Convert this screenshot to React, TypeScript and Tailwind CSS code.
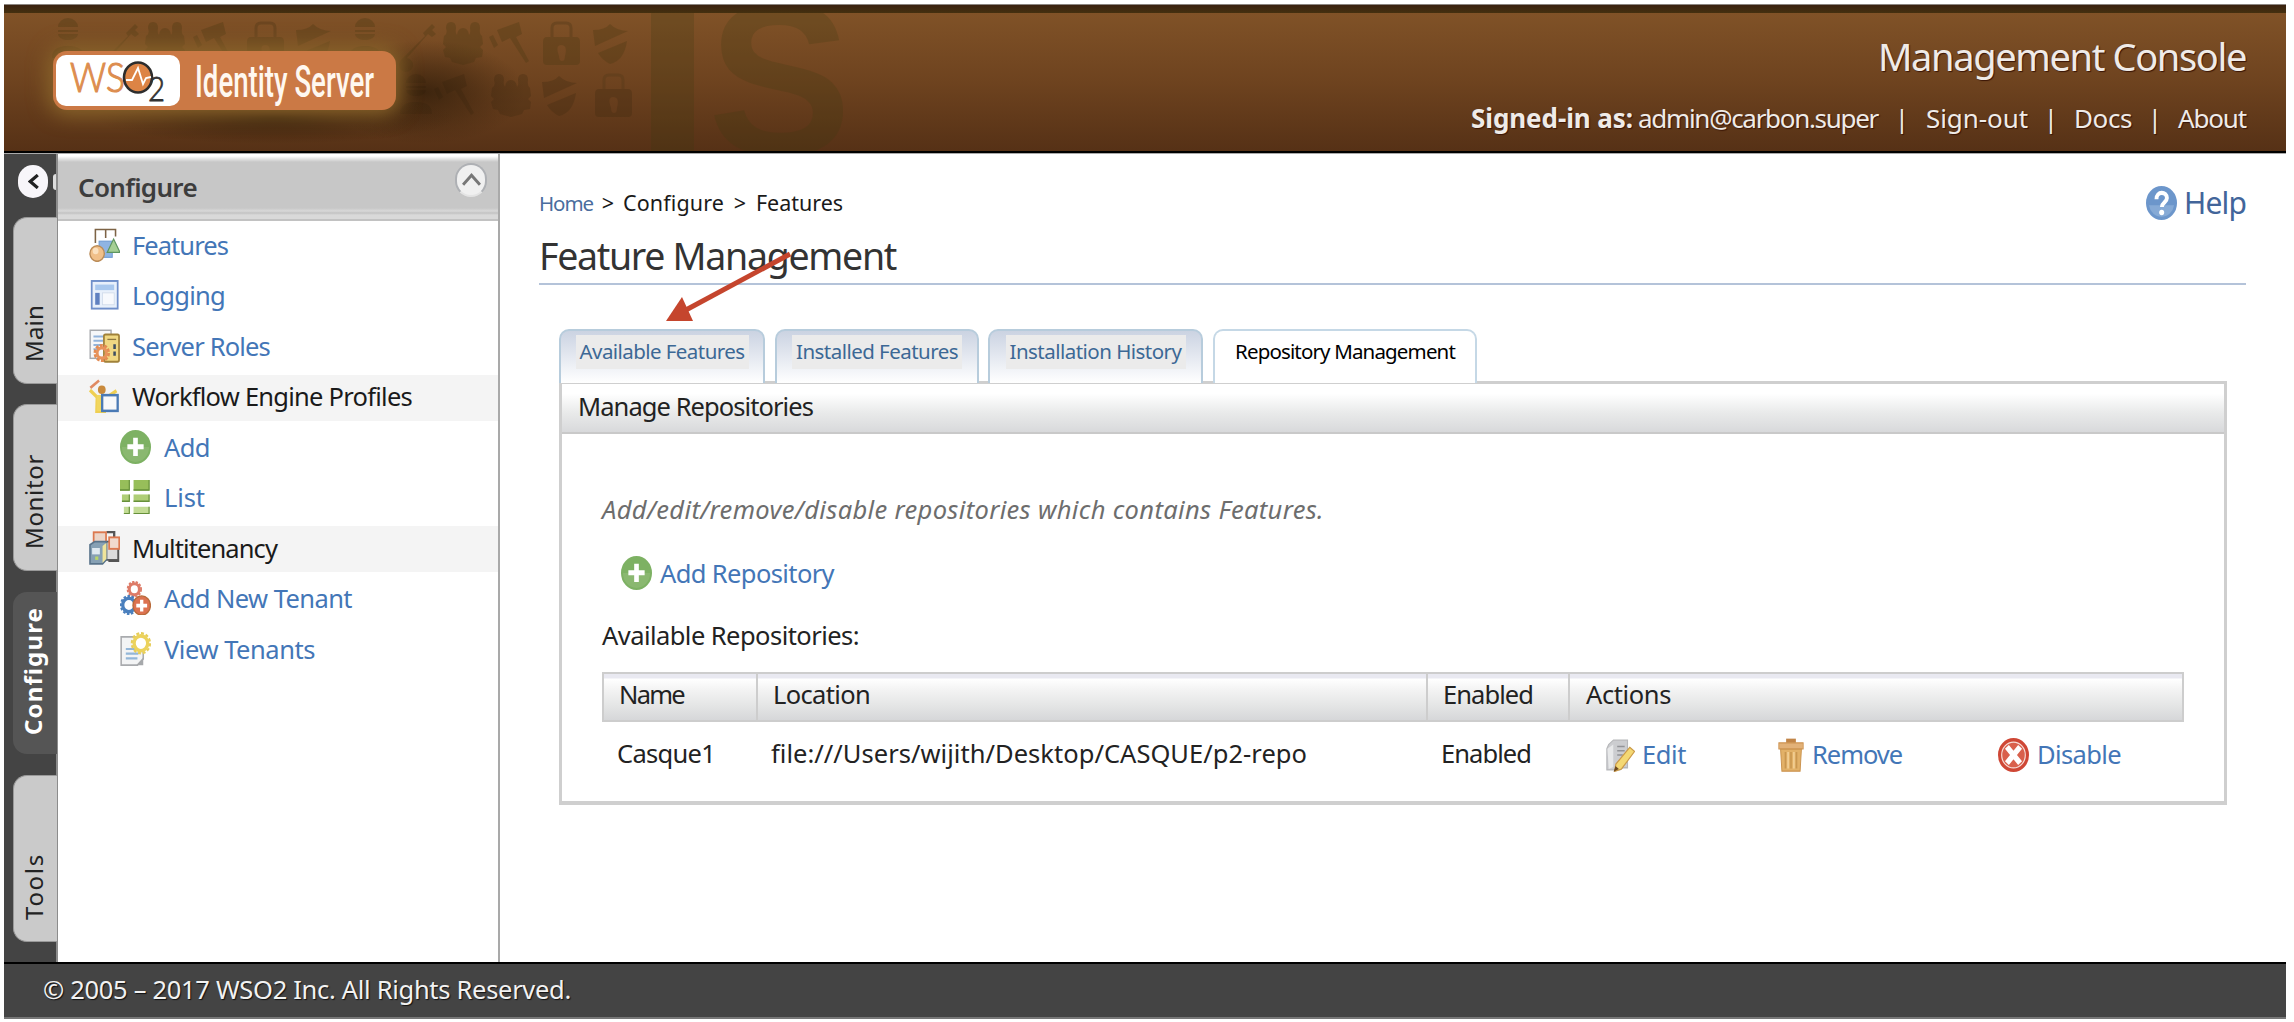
import { useLayoutEffect, useRef, useState } from "react";
import type { ReactNode } from "react";

/* A single line of text whose tracking is computed so that it fills `w` pixels. */
function Fit({ w, children, className = "", vertical = false }: { w: number; children: string; className?: string; vertical?: boolean }) {
  const ref = useRef<HTMLSpanElement>(null);
  const [spacing, setSpacing] = useState(0);
  useLayoutEffect(() => {
    if (!ref.current) return;
    ref.current.style.letterSpacing = "0px";
    const box = ref.current.getBoundingClientRect();
    const natural = vertical ? box.height : box.width;
    const next = (w - natural) / children.length;
    ref.current.style.letterSpacing = `${next}px`;
    setSpacing(next);
  }, [w, children, vertical]);
  return (
    <span className={`block shrink-0 whitespace-nowrap ${className}`}>
      <span ref={ref} style={{ letterSpacing: `${spacing}px` }}>
        {children}
      </span>
    </span>
  );
}

function Icon({ children, className = "h-[34px] w-[31px]" }: { children: ReactNode; className?: string }) {
  return (
    <svg viewBox="0 0 16 16" preserveAspectRatio="none" className={`shrink-0 ${className}`} fill="none">
      {children}
    </svg>
  );
}

const FeaturesIcon = () => (
  <Icon>
    <path d="M3.300 7V.7h10.400V4M8.600.7v4" stroke="#7d6345" strokeWidth=".8" />
    <rect x="5.200" y="6.200" width="6.800" height="7.600" fill="#8fb4e2" stroke="#6f9bd2" strokeWidth=".5" />
    <path d="M12.700 5.200 16 11.500H9.400z" fill="#a5cf94" stroke="#5d9560" strokeWidth=".6" />
    <circle cx="4.200" cy="12" r="3.700" fill="#f1c089" stroke="#bb8c58" strokeWidth=".7" />
    <circle cx="3.400" cy="10.800" r="1.500" fill="#fbe1bf" />
  </Icon>
);
const LoggingIcon = () => (
  <Icon>
    <rect x="1.400" y="1.400" width="13.400" height="13" fill="#e8f0fb" stroke="#6f8fca" strokeWidth=".9" />
    <rect x="3.200" y="3.100" width="9.800" height="2.600" fill="#a9c8ee" />
    <rect x="3.200" y="7" width="2.300" height="5.600" fill="#5f80c0" />
    <rect x="7" y="7" width="6" height="5.600" fill="#f7f9fd" stroke="#cfdaea" strokeWidth=".4" />
  </Icon>
);
const RolesIcon = () => (
  <Icon>
    <rect x=".6" y=".6" width="10.800" height="13.200" fill="#f6f7f9" stroke="#a7a9ad" strokeWidth=".7" />
    <path d="M2.300 3.500h6M2.300 5.500h5M2.300 7.500h4M2.300 9.500h2" stroke="#92b4dc" strokeWidth=".9" />
    <rect x="7.700" y="2.600" width="7.800" height="12.800" rx=".8" fill="#f0d883" stroke="#a0813a" strokeWidth=".9" />
    <path d="M9.500 4.900h4.500" stroke="#8d7740" strokeWidth=".6" />
    <path d="M13.200 7.200v2.200M13.200 10.600v2" stroke="#3d4e61" strokeWidth="1.300" />
    <circle cx="6.600" cy="11.300" r="3.500" stroke="#e38b52" strokeWidth="1.500" strokeDasharray="1.500 .7" />
    <circle cx="6.600" cy="11.300" r="2.400" stroke="#e8935c" strokeWidth="1.500" />
  </Icon>
);
const WorkflowIcon = () => (
  <Icon>
    <path d="M.7 4.200 5.200.7" stroke="#e08a62" strokeWidth="1.300" />
    <path d="M.5 5.200 4.200 8.600 4 15.500h4l1-6.800 5.200-3.200" fill="none" stroke="#efcf52" strokeWidth="1.600" />
    <rect x="4" y="7.500" width="4.500" height="7.500" fill="#f1d65f" />
    <circle cx="6.600" cy="5" r="2" fill="#c98a3c" />
    <rect x="6.800" y="7.600" width="8" height="7.400" fill="#f7f8fa" stroke="#4a7ab5" strokeWidth="1.200" />
  </Icon>
);
const AddIcon = () => (
  <Icon>
    <circle cx="8" cy="8" r="8" fill="#7db163" />
    <path d="M8 15A7 7 0 0 0 15 8H1a7 7 0 0 0 7 7" fill="#97c07e" opacity=".5" />
    <path d="M8 3.600v8.600M3.800 7.900h8.400" stroke="#fff" strokeWidth="2.400" />
  </Icon>
);
const ListIcon = () => (
  <Icon>
    {[0, 6.8, 12.6].map((y, i) => (
      <g key={y}>
        <rect x={i} y={y} width={5 - i} height={i === 0 ? 5 : 3.5} fill={["#97be5a", "#afce76", "#c3dc95"][i]} />
        <rect x="7" y={y} width="8.200" height={i === 0 ? 5 : 3.5} fill={["#97be5a", "#afce76", "#c3dc95"][i]} />
        <path
          d={`M${i} ${y + (i === 0 ? 4.7 : 3.2)}H4.800V${y}M7 ${y + (i === 0 ? 4.7 : 3.2)}h8V${y}`}
          stroke="#66903a"
          strokeWidth=".6"
        />
      </g>
    ))}
  </Icon>
);
const TenancyIcon = () => (
  <Icon>
    <path d="M9 .5h4v3M10 14h5V8" stroke="#555" strokeWidth="1.200" />
    <rect x="9" y="5" width="6" height="8.600" fill="#dcdcdc" stroke="#555" strokeWidth=".8" />
    <rect x="2.400" y=".6" width="6.400" height="5" fill="#ecd5c8" stroke="#dc7950" strokeWidth=".9" />
    <rect x="10.400" y="3" width="5.200" height="5.400" fill="#f1dacd" stroke="#dc7950" strokeWidth=".9" />
    <path d="M.5 6.500 3 5h6v8.500L7 15.500H.5z" fill="#86a0b4" stroke="#59738a" strokeWidth=".8" />
    <path d="m7 7 2-1.500V13l-2 2z" fill="#efe49b" />
    <path d="M1.600 8h4v3h-4z" fill="#dfe9f0" />
    <rect x="3.200" y="12" width="1.600" height="1.600" fill="#b9d66a" />
  </Icon>
);
const NewTenantIcon = () => (
  <Icon>
    <circle cx="7.400" cy="3.900" r="3.500" stroke="#dd7b68" strokeWidth=".9" strokeDasharray="1.200 .7" />
    <circle cx="7.400" cy="3.900" r="2.600" stroke="#dd7b68" strokeWidth="1.500" />
    <circle cx="4.600" cy="11.300" r="4.200" stroke="#4a7fbd" strokeWidth="1" strokeDasharray="1.300 .8" />
    <circle cx="4.600" cy="11.300" r="3.200" stroke="#4a7fbd" strokeWidth="1.700" />
    <circle cx="11.200" cy="11.500" r="4.500" fill="#dc7250" stroke="#b86a3a" strokeWidth=".7" />
    <path d="M11.200 8.800v5.600M8.400 11.600H14" stroke="#fff" strokeWidth="1.700" />
  </Icon>
);
const ViewTenantsIcon = () => (
  <Icon>
    <path d="M.6 2.300H12v10.400L9 15.600H.6z" fill="#f3f4f5" stroke="#a9abae" strokeWidth=".8" />
    <path d="M12 12 8.500 15.600H12z" fill="#a6a8ab" />
    <path d="M3 8h5.500M3 10.200h6.500M3 12.400h6" stroke="#93b6d8" strokeWidth="1" />
    <circle cx="10.800" cy="5.300" r="4.700" stroke="#e6cd58" strokeWidth="1.100" strokeDasharray="1.500 .95" />
    <circle cx="10.800" cy="5.300" r="3.500" fill="#fff" stroke="#ecd25c" strokeWidth="1.700" />
  </Icon>
);
const EditIcon = () => (
  <Icon className="h-[34px] w-[30px]">
    <path d="M2 3 4.500 1H12v13H9.500L8 15H1V5z" fill="#cccdd0" stroke="#b6b7ba" strokeWidth=".6" />
    <path d="M1.300 5 4.400 3v10.600L2 14.600z" fill="#e8e9ea" />
    <path d="M6.500 4h4M6.500 6h4M6.500 8h3" stroke="#929397" strokeWidth=".7" />
    <path d="m13.200 4.400 2.600 1.900-7 8.300-3.600 1.100.6-3.400z" fill="#f4d873" stroke="#cb9a49" strokeWidth=".6" />
    <path d="m5.600 13.200 1.800 1.400-2.800 1.300z" fill="#6e4a20" />
  </Icon>
);
const TrashIcon = () => (
  <Icon className="h-[34px] w-[26px]">
    <path d="M5 .3h6v2H5z" fill="#c18548" />
    <path d="M.5 2.300h15v2.900H.5z" fill="#e2b178" stroke="#cd9350" strokeWidth=".5" />
    <path d="M1.600 5.200h12.800l-.8 10.400H2.400z" fill="#e2b168" stroke="#cb9450" strokeWidth=".6" />
    <path d="M4.600 6.600v7.800M8 6.600v7.800M11.400 6.600v7.800" stroke="#c99750" strokeWidth="1" />
    <path d="M6.200 6.600v7.800M9.800 6.600v7.800" stroke="#f4d49b" strokeWidth=".9" />
  </Icon>
);
const DisableIcon = () => (
  <Icon>
    <circle cx="8" cy="8" r="8" fill="#cf4735" />
    <circle cx="8" cy="8" r="6.100" fill="#d9604c" stroke="#f6dcd6" strokeWidth=".6" />
    <path d="m4.600 4.200 6.800 7.600M11.400 4.200l-6.800 7.600" stroke="#fff" strokeWidth="2.700" />
  </Icon>
);
const HelpIcon = () => (
  <Icon>
    <circle cx="8" cy="8" r="8" fill="#6c96cb" />
    <path d="M1.500 9a6.600 6.600 0 0 0 13 0z" fill="#86aad6" />
    <path d="M5.400 6.200c0-4 5.400-3.700 5.400-.5 0 2-2.600 2-2.600 4.200" stroke="#fff" strokeWidth="2" />
    <circle cx="8.100" cy="12.500" r="1.300" fill="#fff" />
  </Icon>
);

const Key = () => <path d="M0 38 24 14l-2-3 9-9 3 3-3 3 4 4-4 3-4-3-21 24a7 7 0 1 1-6 2" />;
const Ninja = () => (
  <g>
    <path d="M8 9a10 9 0 0 1 20 0zM8 12h20v2H8zM8 16h20c-1 8-19 8-20 0z" />
    <path d="M2 40c0-10 8-12 16-12s16 2 16 12z" />
  </g>
);
const Group = () => (
  <path d="M4 6q0-6 5-6t5 6q-1 5 1 7 1-7 6-7t6 7q2-2 1-7 0-6 5-6t5 6q-1 6 2 8l1 8-3 3 3 3-1 7-6 1-2 4-11 3-11-3-2-4-5-1-2-7 3-3-3-3 1-8q4-2 2-8" />
);
const Gavel = () => <path d="m8 8 22-8 3 12-6 3 13 24-3 2-16-25-8 4zM0 15l4-2 5 10-4 3z" />;
const Lock = () => (
  <g>
    <path d="M10 16V6q0-5 5-5h9q5 0 5 5v10" fill="none" stroke="#4f3717" strokeWidth="3" />
    <path fillRule="evenodd" d="M5 15h29q4 0 4 5v19q0 4-4 4H5q-4 0-4-4V20q0-5 4-5m12 19q-4-11 2-11 7 0 4 11 0 5-3 5t-3-5" />
  </g>
);
const Shield = () => <path d="M0 8q12 0 17-6 7 7 18 7L2 24zM34 19q-3 20-17 23-8-4-12-11z" />;

function HeaderArt() {
  return (
    <svg className="absolute left-0 top-0 h-[138px] w-[900px]" viewBox="4 13 900 138">
      <defs>
        <radialGradient id="smudge">
          <stop offset="0" stopColor="#2b1a08" stopOpacity=".72" />
          <stop offset=".5" stopColor="#331e0a" stopOpacity=".4" />
          <stop offset="1" stopColor="#3a220c" stopOpacity="0" />
        </radialGradient>
      </defs>
      <g fill="#4f3a14" opacity=".36">
        <g transform="translate(50 18)"><Ninja /></g>
        <g transform="translate(104 22)"><Key /></g>
        <g transform="translate(144 22)"><Group /></g>
        <g transform="translate(193 22)"><Gavel /></g>
        <g transform="translate(246 22)"><Lock /></g>
        <g transform="translate(296 22)"><Shield /></g>
        <g transform="translate(347 18)"><Ninja /></g>
        <g transform="translate(401 22)"><Key /></g>
        <g transform="translate(442 22)"><Group /></g>
        <g transform="translate(489 22)"><Gavel /></g>
        <g transform="translate(542 22)"><Lock /></g>
        <g transform="translate(593 22)"><Shield /></g>
      </g>
      <g fill="#3f2a10" opacity=".3">
        <g transform="translate(398 74)"><Ninja /></g>
        <g transform="translate(434 74)"><Gavel /></g>
        <g transform="translate(490 74)"><Group /></g>
        <g transform="translate(542 74)"><Shield /></g>
        <g transform="translate(594 74)"><Lock /></g>
      </g>
      <g fill="#3a3a10" opacity=".22">
        <rect x="651" y="5" width="43" height="150" />
        <text x="708" y="154" fontFamily="Liberation Sans, sans-serif" fontWeight="700" fontSize="215">S</text>
      </g>
      <ellipse cx="425" cy="92" rx="100" ry="52" fill="url(#smudge)" />
      <ellipse cx="275" cy="118" rx="180" ry="26" fill="url(#smudge)" />
    </svg>
  );
}

function Logo() {
  return (
    <div className="relative ml-[49px] mt-[38px] h-[59px] w-[343px] rounded-[14px] bg-[#cb7945] shadow-[0_0_20px_5px_#8a652b]">
      <svg viewBox="53 51 343 59" className="block h-[59px] w-[343px] overflow-visible">
        <rect x="56" y="55" width="124" height="51" rx="10" fill="#fff" />
        <text x="70" y="92" fontFamily="Lato, sans-serif" fontWeight="300" fontSize="41" fill="#dd8d4f" stroke="#dd8d4f" strokeWidth="1.200" textLength="55" lengthAdjust="spacingAndGlyphs">WS</text>
        <ellipse cx="138" cy="77.500" rx="14" ry="15" fill="#dd8445" stroke="#2d2d2d" strokeWidth="2.600" />
        <path d="M126 80h6l2-4 4-8 5 16 3-6 5-1" fill="none" stroke="#fff" strokeWidth="1.800" />
        <text x="148" y="101" fontFamily="Lato, sans-serif" fontWeight="300" fontSize="34" fill="#333" stroke="#333" strokeWidth=".8" textLength="17" lengthAdjust="spacingAndGlyphs">2</text>
        <text x="195" y="97" fontFamily="Roboto, sans-serif" fontWeight="500" fontSize="44" fill="#fff8f0" textLength="179" lengthAdjust="spacingAndGlyphs">Identity Server</text>
      </svg>
    </div>
  );
}

function Header() {
  return (
    <header className="h-[149px] border-t border-[#8b8580] bg-black">
      <div className="h-2 bg-gradient-to-b from-[#3a210f] to-[#44300f]" />
      <div className="relative flex h-[138px] justify-between overflow-hidden bg-gradient-to-b from-[#805227] via-[#6e431f] to-[#563116] pr-[40px]">
        <HeaderArt />
        <Logo />
        <div className="relative flex flex-col items-end text-[#efebe8] [text-shadow:1px_1px_1px_#3a1505]">
          <Fit w={368} className="mt-[20px] text-[38px] leading-[46px]">Management Console</Fit>
          <div className="mt-[19px] flex text-[26px] leading-[40px]">
            <Fit w={162} className="mr-[5px] font-bold">Signed-in as:</Fit>
            <Fit w={240}>admin@carbon.super</Fit>
            <span className="w-[48px] text-center">|</span>
            <Fit w={102}>Sign-out</Fit>
            <span className="w-[46px] text-center">|</span>
            <Fit w={58}>Docs</Fit>
            <span className="w-[46px] text-center">|</span>
            <Fit w={68}>About</Fit>
          </div>
        </div>
      </div>
      <div className="h-[2px] bg-black" />
    </header>
  );
}

function SideTab({ label, w, className }: { label: string; w: number; className: string }) {
  return (
    <div className={`ml-[9px] flex w-[44px] rounded-l-[14px] ${className}`}>
      <Fit vertical w={w} className="rotate-180 text-[24px] leading-[40px] [writing-mode:vertical-rl]">
        {label}
      </Fit>
    </div>
  );
}

function Rail() {
  return (
    <div className="w-[54px] border-r-2 border-[#8c8c8c] bg-[#444]">
      <div className="flex h-[63px] items-start justify-between pl-[14px] pt-[11px]">
        <span className="flex h-[33px] w-[30px] items-center justify-center rounded-full bg-[#f8f6fa]">
          <svg viewBox="0 0 10 14" className="h-[15px] w-[11px]" fill="none">
            <path d="M9 1 2 7l7 6" stroke="#222" strokeWidth="3" />
          </svg>
        </span>
        <span className="mt-[9px] h-4 w-[3px] rounded-l-sm bg-[#ddd]" />
      </div>
      <SideTab label="Main" w={57} className="h-[167px] items-end border border-r-0 border-[#999] bg-[#cacaca] pb-[21px] text-[#222]" />
      <SideTab label="Monitor" w={95} className="mt-[20px] h-[167px] items-end border border-r-0 border-[#999] bg-[#cacaca] pb-[21px] text-[#222]" />
      <SideTab label="Configure" w={128} className="mt-[21px] h-[162px] items-end bg-[#555] pb-[19px] font-bold text-white" />
      <SideTab label="Tools" w={67} className="mt-[21px] h-[167px] items-end border border-r-0 border-[#999] bg-[#cacaca] pb-[21px] text-[#222]" />
    </div>
  );
}

type Item = { label: string; w: number; icon: () => ReactNode; kind?: "head" | "sub" };
const items: Item[] = [
  { label: "Features", w: 96, icon: FeaturesIcon },
  { label: "Logging", w: 93, icon: LoggingIcon },
  { label: "Server Roles", w: 138, icon: RolesIcon },
  { label: "Workflow Engine Profiles", w: 280, icon: WorkflowIcon, kind: "head" },
  { label: "Add", w: 46, icon: AddIcon, kind: "sub" },
  { label: "List", w: 41, icon: ListIcon, kind: "sub" },
  { label: "Multitenancy", w: 145, icon: TenancyIcon, kind: "head" },
  { label: "Add New Tenant", w: 188, icon: NewTenantIcon, kind: "sub" },
  { label: "View Tenants", w: 151, icon: ViewTenantsIcon, kind: "sub" },
];

function Sidebar() {
  return (
    <nav className="w-[442px] border-r-2 border-[#a9a9a9] bg-white">
      <div className="flex h-[67px] items-center justify-between border-b-2 border-[#c2c2c2] bg-[linear-gradient(to_bottom,#fff_0,#fff_2px,#c7c7c7_8px,#c7c7c7_54px,#d8d8d8_57px,#c2c2c2_59px,#d9d9d9_61px,#d9d9d9_65px)] pl-[20px] pr-[11px]">
        <Fit w={119} className="text-[26px] font-semibold leading-[40px] text-[#3d3d3d]">Configure</Fit>
        <span className="mb-[14px] flex h-[34px] w-[32px] items-center justify-center rounded-full border-2 border-[#aeb0b4] border-b-[#e4e4e4] bg-[#f0f0f0]">
          <svg viewBox="0 0 18 12" className="h-[13px] w-[19px]" fill="none">
            <path d="m1 11 8-9 8 9" stroke="#777" strokeWidth="2.800" />
          </svg>
        </span>
      </div>
      <ul>
        {items.map(({ label, w, icon: Glyph, kind }) => (
          <li key={label} className="flex h-[50.5px] items-center">
            <div
              className={`flex h-[46px] w-full items-center pb-[3px] text-[25.5px] ${
                kind === "head" ? "bg-[#f4f4f4] pl-[31px] text-[#1a1a1a]" : kind === "sub" ? "pl-[62px] text-[#4376b7]" : "pl-[31px] text-[#4376b7]"
              }`}
            >
              <Glyph />
              <Fit w={w} className={kind === "sub" ? "ml-[13px]" : "ml-[12px]"}>{label}</Fit>
            </div>
          </li>
        ))}
      </ul>
    </nav>
  );
}

function Tab({ label, w, className }: { label: string; w: number; className: string }) {
  return (
    <div className={`flex h-[54px] justify-center rounded-t-[10px] border-2 border-b-0 border-[#b7ccdc] bg-gradient-to-b from-[#cbd3e2] to-white pt-[4px] text-[#3c6895] ${className}`}>
      <span className="h-[34px] bg-[#ebebeb] px-[4px] text-[20.5px] leading-[32px]">
        <Fit w={w}>{label}</Fit>
      </span>
    </div>
  );
}

function Panel() {
  return (
    <section className="ml-[20px] mr-[19px]">
      <div className="relative -mb-[2px] flex">
        <Tab label="Available Features" w={165} className="w-[206px]" />
        <Tab label="Installed Features" w={162} className="ml-[10px] w-[204px]" />
        <Tab label="Installation History" w={172} className="ml-[9px] w-[215px]" />
        <div className="ml-[10px] flex h-[54px] w-[264px] justify-center rounded-t-[10px] border-2 border-b-0 border-[#c5d8e6] bg-white pt-[4px] text-[20.5px] leading-[32px] text-black">
          <Fit w={220}>Repository Management</Fit>
        </div>
      </div>
      <div className="border-[3px] border-b-4 border-[#cfcfcf] pb-[17px]">
        <div className="flex h-[50px] items-center border-b-2 border-[#c9c9c9] bg-gradient-to-b from-white from-20% via-[#e9eaea] via-60% to-[#d8d9db] pb-[4px] pl-[16px]">
          <Fit w={235} className="text-[25.5px] text-[#222]">Manage Repositories</Fit>
        </div>
        <div className="pl-[40px] pr-[40px] pt-[55px] text-[25.5px] text-[#222]">
          <Fit w={722} className="h-[40px] italic leading-[40px] text-[#6d6d6d]">Add/edit/remove/disable repositories which contains Features.</Fit>
          <div className="mt-[21px] flex h-[46px] items-center pl-[19px] text-[#4376b7]">
            <AddIcon />
            <Fit w={174} className="ml-[8px]">Add Repository</Fit>
          </div>
          <Fit w={257} className="mt-[19px] h-[40px] leading-[40px]">Available Repositories:</Fit>
          <div className="mt-[17px] grid h-[50px] grid-cols-[154px_670px_142px_1fr] border-2 border-[#cdcdcd] bg-[linear-gradient(to_bottom,#e9e9f1_0,#e9e9f1_4px,#fff_5px,#f4f4f4_15px,#e4e5e5_32px,#d6d7d9_46px)] leading-[40px]">
            <Fit w={65} className="border-r-2 border-[#cdcdcd] pl-[15px]">Name</Fit>
            <Fit w={97} className="border-r-2 border-[#cdcdcd] pl-[15px]">Location</Fit>
            <Fit w={90} className="border-r-2 border-[#cdcdcd] pl-[15px]">Enabled</Fit>
            <Fit w={85} className="pl-[16px]">Actions</Fit>
          </div>
          <div className="grid h-[62px] grid-cols-[155px_670px_141px_1fr] items-center">
            <Fit w={98} className="pl-[15px]">Casque1</Fit>
            <Fit w={536} className="pl-[14px]">file:///Users/wijith/Desktop/CASQUE/p2-repo</Fit>
            <Fit w={90} className="pl-[14px]">Enabled</Fit>
            <div className="flex items-center pl-[37px] pt-[3px] text-[#4376b7]">
              <EditIcon />
              <Fit w={44} className="ml-[7px] w-[45px]">Edit</Fit>
              <span className="w-[91px]" />
              <TrashIcon />
              <Fit w={90} className="ml-[8px] w-[91px]">Remove</Fit>
              <span className="w-[95px]" />
              <DisableIcon />
              <Fit w={84} className="ml-[8px]">Disable</Fit>
            </div>
          </div>
        </div>
      </div>
    </section>
  );
}

function Content() {
  return (
    <main className="relative flex-1 bg-white pl-[39px] pr-[40px] pt-[27px]">
      <div className="flex h-[44px] items-center justify-between text-[21.5px] text-[#1a1a1a]">
        <div className="flex items-center">
          <Fit w={54} className="text-[20.5px] text-[#4a6d9e]">Home</Fit>
          <span className="w-[30px] text-center">&gt;</span>
          <Fit w={101}>Configure</Fit>
          <span className="w-[32px] text-center">&gt;</span>
          <Fit w={87}>Features</Fit>
        </div>
        <div className="flex items-center">
          <HelpIcon />
          <Fit w={62} className="ml-[7px] text-[30px] leading-[44px] text-[#42659a]">Help</Fit>
        </div>
      </div>
      <div className="flex h-[60px] items-center border-b-2 border-[#b4c3d9] pt-[3px]">
        <Fit w={357} className="text-[37.5px] leading-[50px] text-[#333]">Feature Management</Fit>
      </div>
      <div className="h-[44px]" />
      <Panel />
      <svg className="absolute left-[164px] top-[96px] h-[76px] w-[130px]" viewBox="664 250 130 76">
        <path d="M790 254 684 311" stroke="#c5452d" strokeWidth="5" />
        <path d="m666 321 16-24 11 24z" fill="#c5452d" />
      </svg>
    </main>
  );
}

export default function App() {
  return (
    <div className="h-[1022px] w-[2294px] bg-white pl-1 pr-2 pt-1 font-['Noto_Sans',sans-serif]">
      <Header />
      <div className="flex h-[809px] border-t border-[#aaa]">
        <Rail />
        <Sidebar />
        <Content />
      </div>
      <footer className="h-[57px] border-b-2 border-t-2 border-b-[#777] border-t-black bg-[#444] pl-[39px] text-[#f2f2f2]">
        <Fit w={528} className="text-[25.5px] leading-[50px] [text-shadow:1px_1px_1px_#111]">© 2005 – 2017 WSO2 Inc. All Rights Reserved.</Fit>
      </footer>
    </div>
  );
}
